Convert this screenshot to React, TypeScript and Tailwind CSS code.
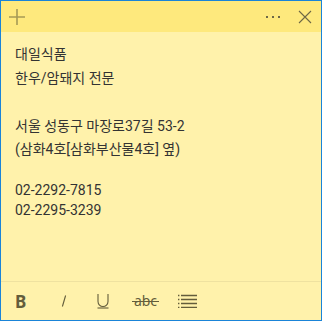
import React from "react";

const lines: { text: string; h: string }[] = [
  { text: "대일식품", h: "h-[24px]" },
  { text: "한우/암돼지 전문", h: "h-[24px]" },
  { text: "", h: "h-[24px]" },
  { text: "서울 성동구 마장로37길 53-2", h: "h-[24px]" },
  { text: "(삼화4호[삼화부산물4호] 옆)", h: "h-[22px]" },
  { text: "", h: "h-[20px]" },
  { text: "02-2292-7815", h: "h-[20px]" },
  { text: "02-2295-3239", h: "h-[20px]" },
];

export default function App() {
  return (
    <div
      className="w-[322px] h-[321px] border border-[#1a84d8] flex flex-col bg-[#fff2ab]"
      style={{ fontFamily: 'Roboto, "Noto Sans CJK KR", sans-serif' }}
    >
      {/* header */}
      <div className="h-[31px] bg-[#fee97d] flex items-center shrink-0">
        <div className="w-[31px] h-[31px] flex items-center justify-center">
          <svg width="18" height="18" viewBox="0 0 18 18">
            <path d="M9 1 V17 M1 9 H17" stroke="#a69a55" strokeWidth="1.6" />
          </svg>
        </div>
        <div className="flex-1" />
        <div className="flex items-center gap-[4px] mr-[18px]">
          <div className="w-[2px] h-[2px] bg-[#6e6846]" />
          <div className="w-[2px] h-[2px] bg-[#6e6846]" />
          <div className="w-[2px] h-[2px] bg-[#6e6846]" />
        </div>
        <div className="w-[14px] h-[14px] mr-[9px] flex items-center justify-center">
          <svg width="14" height="14" viewBox="0 0 14 14">
            <path d="M1 1 L13 13 M13 1 L1 13" stroke="#6e6846" strokeWidth="1.1" />
          </svg>
        </div>
      </div>

      {/* body */}
      <div className="flex-1 pt-[10px] pl-[14px] text-[14px] text-[#333333]">
        {lines.map((l, i) => (
          <div key={i} className={`${l.h} flex items-center whitespace-pre leading-none`}>
            {l.text}
          </div>
        ))}
      </div>

      {/* separator */}
      <div className="h-px bg-[#efe2a0] shrink-0" />

      {/* toolbar */}
      <div className="h-[38px] shrink-0 flex items-center text-[#635d3b]">
        <div className="ml-[14px] w-[12px] flex items-center">
          <span className="text-[17px] font-bold leading-none" style={{ fontFamily: '"Noto Sans", sans-serif' }}>
            B
          </span>
        </div>
        <div className="ml-[32px] w-[10px] flex items-center justify-center">
          <svg width="8" height="14" viewBox="0 0 8 14">
            <path d="M5.6 1.5 L2.4 12.5" stroke="#635d3b" strokeWidth="1.1" />
          </svg>
        </div>
        <div className="ml-[27px] w-[14px] flex items-center justify-center">
          <svg width="14" height="16" viewBox="0 0 14 16">
            <path d="M2 1 V8.5 A5 5 0 0 0 12 8.5 V1" fill="none" stroke="#635d3b" strokeWidth="1.1" />
            <path d="M1.5 15 H12.5" stroke="#635d3b" strokeWidth="1.1" />
          </svg>
        </div>
        <div className="ml-[22px] relative w-[27px] flex items-center justify-center">
          <span className="text-[14px] leading-none" style={{ fontFamily: '"Noto Sans", sans-serif' }}>abc</span>
          <div className="absolute left-0 right-0 top-1/2 h-px bg-[#635d3b]" />
        </div>
        <div className="ml-[19px] w-[19px] flex items-center justify-center">
          <svg width="19" height="14" viewBox="0 0 19 14">
            <g stroke="#635d3b" strokeWidth="1.4">
              <path d="M0 1.5 H1.4 M0 5.5 H1.4 M0 9.5 H1.4 M0 13.5 H1.4" />
              <path d="M3 1.5 H19 M3 5.5 H19 M3 9.5 H19 M3 13.5 H19" />
            </g>
          </svg>
        </div>
      </div>
    </div>
  );
}
